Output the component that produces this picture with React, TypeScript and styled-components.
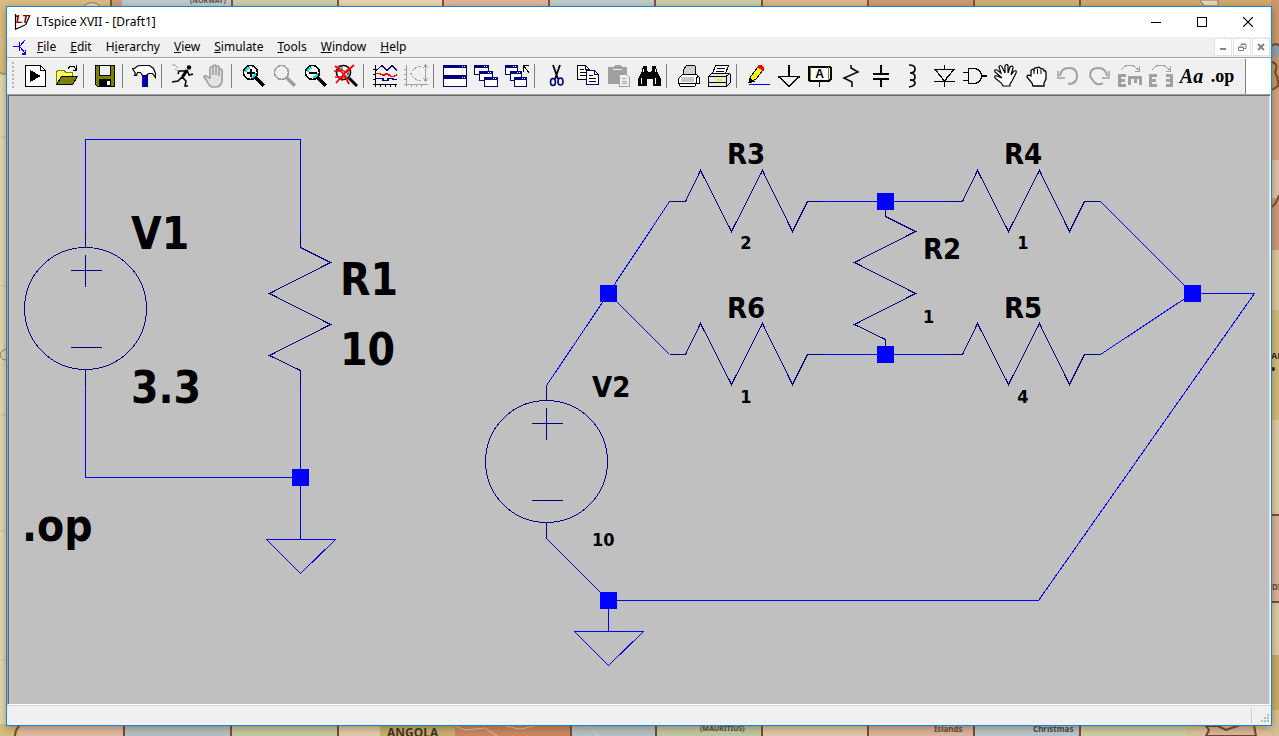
import React from "react";
import styled, { createGlobalStyle } from "styled-components";

const UI_FONT = '"Noto Sans", "Noto Sans CJK TC", sans-serif';
const SHEET_FONT = '"DejaVu Sans Condensed", "DejaVu Sans", sans-serif';
const GREY = "#a0a0a0";
const NAVY = "#000080";
const OLIVE = "#808000";

const GlobalStyle = createGlobalStyle`
  * { box-sizing: border-box; }
  html, body { margin: 0; padding: 0; }
  body { font-family: ${UI_FONT}; font-size: 12px; color: #000; overflow: hidden; }
  button { font: inherit; color: inherit; border: 0; padding: 0; margin: 0; background: none; }
`;

const Desktop = styled.div`
  position: relative;
  display: flex;
  min-height: 100vh;
  padding: 6px 7px 10px 6px;
  background: #e6d7b3;
  overflow: hidden;
`;

const MapSvg = styled.svg`
  position: absolute;
  inset: 0;
  width: 100%;
  height: 100%;
`;

const AppWindow = styled.main`
  position: relative;
  flex: 1;
  min-width: 0;
  display: flex;
  flex-direction: column;
  border: 1px solid #1883d7;
  background: #f0f0f0;
  box-shadow: 0 2px 8px rgba(60, 40, 10, 0.4);
`;

const TitleBar = styled.header`
  display: flex;
  align-items: center;
  height: 30px;
  padding-left: 7px;
  background: #fff;
`;

const Title = styled.h1`
  flex: 1;
  margin: 0 0 0 5px;
  font-size: 12px;
  line-height: 16px;
  font-weight: 400;
`;

const CaptionButton = styled.button`
  display: flex;
  align-items: center;
  justify-content: center;
  width: 46px;
  height: 28px;
`;

const MenuBar = styled.nav`
  display: flex;
  align-items: center;
  height: 20px;
  padding-left: 5px;
`;

const MenuItem = styled.button`
  height: 20px;
  padding: 0 7px;
  line-height: 20px;
`;

const AccessKey = styled.u`
  text-underline-offset: 1px;
`;

const ChildControls = styled.div`
  display: flex;
  gap: 1px;
  margin: 0 1px 0 auto;
  background: #fff;
`;

const ChildButton = styled.button`
  display: flex;
  align-items: center;
  justify-content: center;
  width: 18px;
  height: 18px;
  border: 1px solid #e3e3e3;
  background: #fff;
`;

const ToolRow = styled.div`
  display: flex;
  background: #fff;
  border-top: 1px solid #a0a0a0;
  padding-top: 1px;
`;

const ToolBar = styled.div`
  display: flex;
  align-items: center;
  height: 35px;
  padding: 0 7px 1px 5px;
  background: #f0f0f0;
  border-right: 1px solid #808080;
`;

const Grip = styled.span`
  width: 2px;
  height: 28px;
  margin-right: 5px;
  background: repeating-linear-gradient(#b4b4b4 0 2px, #f0f0f0 2px 4px);
`;

const ToolButton = styled.button`
  flex: none;
  display: flex;
  align-items: center;
  justify-content: center;
  width: 31px;
  height: 30px;
`;

const Lettering = styled.span<{ $italic?: boolean }>`
  font-family: "Liberation Serif", serif;
  font-size: ${(p) => (p.$italic ? "20px" : "18px")};
  line-height: 20px;
  font-weight: 700;
  font-style: ${(p) => (p.$italic ? "italic" : "normal")};
`;

const Separator = styled.span`
  flex: none;
  width: 1px;
  height: 24px;
  margin: 0 5px 0 2px;
  background: #808080;
`;

const Sheet = styled.section`
  flex: 1;
  min-height: 0;
  display: flex;
  background: #c0c0c0;
  border: 1px solid;
  border-color: #a0a0a0 #fff #fff #a0a0a0;
  box-shadow: inset 1px 1px #696969, inset -1px 0 #e3e3e3;
`;

const SheetSvg = styled.svg`
  flex: 1;
  min-width: 0;
  margin: 1px 1px 0 1px;
  font-family: ${SHEET_FONT};
  font-weight: 700;
`;

const StatusBar = styled.footer`
  display: flex;
  align-items: center;
  justify-content: flex-end;
  gap: 9px;
  height: 20px;
  padding-right: 1px;
  border-top: 1px solid #d7d7d7;
`;

const StatusDivider = styled.span`
  width: 1px;
  height: 15px;
  background: #d0d0d0;
`;

const ResizeGrip = styled.svg`
  margin-top: 6px;
`;

/* ---------- map behind the window ---------- */

const topBands: [number, number, string][] = [
  [0, 110, "#d9bd80"], [112, 10, "#cf9a7c"], [122, 109, "#c0cccb"], [232, 105, "#ccd0aa"],
  [339, 104, "#ebd5b0"], [444, 104, "#dfb79c"], [549, 106, "#c1cccb"], [656, 106, "#ccd0aa"],
  [763, 104, "#dcb88a"], [868, 106, "#cf9b72"], [975, 105, "#d0b172"], [1081, 198, "#d2ab6c"],
];
const bottomBands: [number, number, string][] = [
  [0, 19, "#d5bb7c"], [19, 105, "#dfbba4"], [124, 107, "#b4c2c1"], [231, 107, "#c3c9a3"],
  [338, 42, "#dfcba9"], [380, 75, "#c7b070"], [455, 116, "#cb8861"], [571, 85, "#b5c3c8"],
  [656, 106, "#c1c8a3"], [762, 106, "#decaa6"], [868, 106, "#dab49e"], [974, 106, "#b9c7cc"],
  [1080, 107, "#c9cea8"], [1187, 92, "#dac39a"],
];
const sideBands: [number, number, string][] = [
  [0, 43, "#c99770"], [43, 14, "#8ea2a6"], [57, 33, "#c79b66"], [90, 70, "#d2a482"],
  [160, 38, "#dfc1ac"], [198, 52, "#cd9a7a"], [250, 60, "#dbc79b"], [310, 110, "#cfba7c"],
  [420, 95, "#dacba4"], [515, 87, "#d9b39b"], [602, 53, "#dbcaa5"], [655, 55, "#c8ab66"],
  [710, 26, "#d5bf92"],
];

const MapBackdrop = () => (
  <MapSvg viewBox="0 0 1279 736" preserveAspectRatio="none" aria-hidden="true">
    <rect y="0" width="8" height="75" fill="#d9bd80" />
    <path d="M0 137h8M0 286h8M0 415h8M0 531h8M0 660h8" stroke="#cfc09b" />
    <path d="M0 72q4 4 8 0M8 350q-6-2-8 5q2 7 8 4" stroke="#8a7a60" fill="none" />
    {topBands.map(([x, w, c]) => <rect key={x} x={x} width={w} height="8" fill={c} />)}
    <path d="M111 0v8M232 0v8M338 0v8M443 0v8M549 0v8M655 0v8M762 0v8M868 0v8M974 0v8M1080 0v8" stroke="#85503d" strokeWidth="2" />
    <path d="M84 6q8-7 16 0M1200 0l4 6h14v-6z" stroke="#9b7350" fill="#e8d9ba" />
    <text x="190" y="3" fontSize="7" fontWeight="700" fill="#57534c">(NORWAY)</text>
    {bottomBands.map(([x, w, c]) => <rect key={x} x={x} y="724" width={w} height="12" fill={c} />)}
    <path d="M124 724v12M231 724v12M338 724v12M571 724v12M656 724v12M762 724v12M868 724v12M974 724v12M1080 724v12M15 736q0-6 5-11" stroke="#7a4937" strokeWidth="2" fill="none" />
    <path d="M453 725l12 5l20-2l12 8M500 725l20 4l15-3M588 724l10 12" stroke="#e4c9b4" strokeWidth="1" fill="none" />
    <path d="M1206 736l3-6l-3-4h12l8 4l14-5h14l2 11z" fill="#d8b79a" stroke="#75432f" strokeWidth="2" />
    <text x="387" y="737" fontSize="12" fontWeight="700" fill="#3d352a">ANGOLA</text>
    <text x="700" y="731" fontSize="7" fontWeight="700" fill="#4c4a40">(MAURITIUS)</text>
    <text x="934" y="732" fontSize="8" fontWeight="700" fill="#5c4c45">Islands</text>
    <text x="937" y="741" fontSize="7" fontWeight="700" fill="#5c4c45">(AUST.)</text>
    <text x="1033" y="732" fontSize="8" fontWeight="700" fill="#3f494e">Christmas</text>
    <text x="1041" y="741" fontSize="7" fontWeight="700" fill="#3f494e">Island</text>
    {sideBands.map(([y, h, c]) => <rect key={y} x="1271" y={y} width="8" height={h} fill={c} />)}
    <path d="M1272 46q4-4 7 0M1272 62q7 2 3 10q4 8 3 14l-6 4M1279 195q-2 8-7 12M1271 515h8M1271 602h8" stroke="#7a4937" strokeWidth="2" fill="none" />
    <circle cx="1273" cy="369" r="2" fill="#2c261c" />
    <text x="1271" y="359" fontSize="9" fontWeight="700" fill="#2c261c">AN</text>
    <text x="1272" y="590" fontSize="8" fontWeight="700" fill="#5c4c45">DI</text>
  </MapSvg>
);

/* ---------- toolbar icons, each on a 24px grid ---------- */

const Icon = ({ children, smooth }: { children: React.ReactNode; smooth?: boolean }) => (
  <svg width="24" height="24" viewBox="0 0 24 24" fill="none" stroke="#000" aria-hidden="true"
    shapeRendering={smooth ? "auto" : "crispEdges"}>{children}</svg>
);

const Lens = ({ color = "#000", sign }: { color?: string; sign?: "plus" | "minus" }) => (
  <>
    <circle cx="9.500" cy="8.500" r="7" fill={color === "#000" ? "#fff" : "#f0f0f0"} stroke={color} strokeWidth="1.6" />
    {color === "#000" && <path d="M5 8q0-4 4-4M14 9q0 4-4 4" stroke="#00e5ee" strokeWidth="2" />}
    <path d="M15 14L23 22" stroke={color} strokeWidth="3" />
    {sign && <path d="M5.500 8.500h8" strokeWidth="2" />}
    {sign === "plus" && <path d="M9.500 4.500v8" strokeWidth="2" />}
  </>
);

const MiniWindow = ({ x, y, w, h }: { x: number; y: number; w: number; h: number }) => (
  <>
    <rect x={x + 0.5} y={y + 0.5} width={w - 1} height={h - 1} fill="#fff" stroke={NAVY} />
    <rect x={x} y={y} width={w} height="3" fill={NAVY} stroke="none" />
    <path d={`M${x + w - 5} ${y + 1.5}h1m1 0h1`} stroke="#fff" />
  </>
);

const icons: Record<string, React.ReactNode> = {
  run: <Icon><path d="M2.500 1.500h15l5 5v16h-20z" fill="#fff" /><path d="M17.500 1.500v5h5" /><path d="M7 6v12l11-6z" fill="#000" stroke="none" /></Icon>,
  open: <Icon><path d="M2.500 20V8l2-2h5l2 2h7v4" fill="#ffff66" stroke={OLIVE} /><path d="M2.500 20.500l5-8h16l-5 8z" fill={OLIVE} /><path d="M14 4.500l2-2h4l2 3M22.500 1v5h-4" /></Icon>,
  save: <Icon><path d="M2.500 1.500h19v21h-17l-2-2z" fill={OLIVE} /><rect x="6.500" y="1.500" width="11" height="10" fill="#f0f0f0" /><rect x="6" y="15" width="12" height="8" fill="#000" stroke="none" /><rect x="14" y="17" width="3" height="4" fill="#fff" stroke="none" /></Icon>,
  hammer: <Icon smooth><rect x="10" y="9" width="6" height="14" fill="#0000d8" stroke="none" /><path d="M14.500 11v12" stroke={NAVY} strokeWidth="3" /><path d="M0.500 4.500l2 0l3-2.500l3-0.500h9l4 3l2 5v4l-3-4h-4l-2 2h-4l-2-3h-3l-1 3l-2 0l1-2z" fill="#fff" strokeWidth="1.200" /></Icon>,
  runner: <Icon smooth><circle cx="18" cy="3.500" r="2.200" fill="#000" stroke="none" /><path d="M16 6l-4.500 7" strokeWidth="3.200" /><path d="M16 6l2 5l4-1M14 7l-6 0l-1 3M11 13l-4 4l-6 1M11 13l4 4l-1 5h3" strokeWidth="1.500" /><path d="M1 1l3 0l3 3M4 5l3 2" stroke={GREY} /></Icon>,
  halt: <Icon smooth><path d="M8 14V4q2-3 3 0v7V2q2-2 3 0v9V3q2-2 3 0v9V6q2-2 3 0v11q-1 5-5 6h-5q-3-1-5-6l-3-4q1-3 5 1z" fill="#e4e4e4" stroke={GREY} strokeWidth="1.700" /></Icon>,
  zoomIn: <Icon><Lens sign="plus" /></Icon>,
  zoomPan: <Icon><Lens color={GREY} /></Icon>,
  zoomOut: <Icon><Lens sign="minus" /></Icon>,
  zoomFit: <Icon smooth><Lens /><path d="M1 2l5 4l5 6l4 8M20 1l-9 8L2 19" stroke="#f00" strokeWidth="1.800" /><path d="M0 7h6M5 1v5M1 13h10M14 5v6M7 5l4 3l3-3M8 12v5" stroke="#f00" strokeWidth="1.300" /></Icon>,
  autorange: <Icon><path d="M2.500 1v22M0 20.500h24M0 5.500h3M0 10.500h3M0 15.500h3M7.500 20v3M12.500 20v3M17.500 20v3M22.500 20v3" /><path d="M3 6.500l6-5l5 5l5-5l5 5" stroke={NAVY} /><path d="M3 9.500h4l3 2l4-2l4 3h3l3-2" stroke="#f00" strokeWidth="1.500" /><path d="M3 14.500h7v2h5v-2h5v1h4" stroke={NAVY} strokeWidth="1.500" /></Icon>,
  fft: <Icon><g stroke={GREY}><path d="M2.500 1v22M0 20.500h24M0 5.500h3M0 10.500h3M0 15.500h3M7.500 20v3M12.500 20v3M17.500 20v3M21.500 1v16M19 4l2.500-3l2.500 3M19 14l2.500 3l2.500-3" /><path d="M17 2.500h-3q-6 3-7 7q1 4 7 7h3" strokeDasharray="3 1" /></g></Icon>,
  tile: <Icon><MiniWindow x={0} y={1} w={24} h={11} /><MiniWindow x={0} y={12} w={24} h={11} /></Icon>,
  cascade: <Icon><MiniWindow x={0} y={1} w={15} h={10} /><MiniWindow x={5} y={7} w={14} h={10} /><MiniWindow x={10} y={13} w={14} h={10} /></Icon>,
  closeAll: <Icon><MiniWindow x={0} y={1} w={13} h={10} /><MiniWindow x={5} y={7} w={12} h={10} /><MiniWindow x={9} y={13} w={13} h={10} /><path d="M18.500 8V1.500H24M19 2l5 7" /></Icon>,
  cut: <Icon smooth><path d="M9 1l5 14M16 1l-5 14" strokeWidth="1.800" /><ellipse cx="9" cy="18" rx="2.500" ry="3.500" stroke={NAVY} strokeWidth="1.600" /><ellipse cx="16.500" cy="17.500" rx="2.500" ry="3.500" stroke={NAVY} strokeWidth="1.600" /></Icon>,
  copy: <Icon><path d="M2.500 1.500h8l4 4v10h-12z" fill="#fff" /><path d="M10.500 1.500v4h4M5 5.500h4M5 8.500h6M5 11.500h6" /><path d="M11.500 6.500h8l4 4v10h-12z" fill="#fff" stroke={NAVY} /><path d="M19.500 6.500v4h4" stroke={NAVY} /><path d="M14 11.500h4M14 14.500h7M14 17.500h7" /></Icon>,
  paste: <Icon><path d="M2 3h5l2-2h5l2 2h5v17H2z" fill={GREY} stroke="none" /><path d="M7 5.500h9" stroke="#f0f0f0" /><path d="M13.500 10.500h7l3 3v9h-10z" fill="#f0f0f0" stroke={GREY} /><path d="M16 14.500h4M16 17.500h5M16 19.500h5" stroke={GREY} /></Icon>,
  find: <Icon><path d="M6 2h4v4l1 2h3l1-2V2h4l1 5l4 8v7h-8v-7h-6v7H1v-7l4-8z" fill="#000" stroke="none" /><path d="M6.500 5v3M18.500 5v3M4.500 14v6M18.500 14v6" stroke="#fff" /></Icon>,
  print: <Icon><path d="M7.500 11.500v-6l3-4h8l1 1v9" fill="#d0d0d0" /><path d="M2.500 14.500l4-4h14l3 3v6h-3l-2 3h-14l-2-3z" fill="#fff" /><path d="M5 13h13v5H5z" fill="#c8c8c8" stroke="none" /><path d="M2 19.500h18v-6l3-1" /></Icon>,
  pageSetup: <Icon><path d="M5.500 9.500l3-8h13l-3 8" fill="#fff" /><path d="M10 4.500h8M9 7.500h8" /><path d="M1.500 12.500l3-3h18l1 1v8l-4 4h-18z" fill="#e8e8e8" /><path d="M1 12.500h18v10M19 12.500l4-3M1 18.500h18" /><path d="M10 15.500h5" stroke="#ffe600" strokeWidth="2" /></Icon>,
  wire: <Icon><path d="M4 18l1-6l7-9l5 3l-7 9z" fill="#ff0" /><path d="M3 18.500l1-4l4 3z" fill="#000" /><path d="M12 3l1-2h2l2 2v3l-2-1z" fill="#f00" stroke="#f00" /><path d="M3 20.500h21" stroke="#00f" /></Icon>,
  ground: <Icon><path d="M12 1v11" strokeWidth="1.500" /><path d="M1 12.500h22M1.500 12.500l10.500 10l10.500-10" strokeWidth="1.500" /></Icon>,
  label: <Icon><path d="M0.500 3.500l1-1h20l1 1v12l-1 1h-20l-1-1z" fill="#fff" strokeWidth="2" /><path d="M2.500 3v13M20.500 3v13" stroke={OLIVE} /><path d="M11.500 17v6" /><text x="11.500" y="14" fontSize="12" fontWeight="700" textAnchor="middle" fill="#000" stroke="none" fontFamily="Liberation Sans">A</text></Icon>,
  resistor: <Icon smooth><path d="M12 1v3l7 4l-14 6l8 4v5" strokeWidth="1.500" /></Icon>,
  capacitor: <Icon><path d="M11 1v9M11 15v8" strokeWidth="2" /><path d="M3 10h16M3 15h16" strokeWidth="2" /></Icon>,
  inductor: <Icon smooth><path d="M8 1q6 0 6 4t-5 4q5 0 5 4t-5 3q5 0 5 3t-6 4" strokeWidth="1.700" /></Icon>,
  diode: <Icon><path d="M12.500 1v5M12.500 17v6M2 5.500h21M3.500 6l9 11l9-11M2 17.500h21" strokeWidth="1.300" /></Icon>,
  gate: <Icon><path d="M5.500 4.500h6q7 1 7 7.500t-7 7.500h-6zM0 8.500h5M0 16.500h5" strokeWidth="1.300" /><path d="M19 12h5" strokeWidth="2" /></Icon>,
  move: <Icon smooth><path d="M8 14L1 8q-1-3 2-2l4 3L5 3q1-3 3 0l3 6V2q2-3 3 0v7l2-6q3-2 3 1l-2 7l3-4q3-1 2 2l-4 8l-2 3v2H9q-1-3-3-4l-5-4q-1-3 2-2z" fill="#fff" strokeWidth="1.200" /></Icon>,
  drag: <Icon smooth><path d="M6 12V7q1-3 3-1q0-3 3-2q2-2 4 1q3-1 3 2q2-1 2 2v6l-2 4v3H8l-1-3l-5-6q0-3 4-1z" fill="#fff" strokeWidth="1.300" /><path d="M9 6v4M12.500 5v5M16 6v4" /></Icon>,
  undo: <Icon smooth><path d="M4 12q1-8 9-8t8 8t-9 8" stroke={GREY} strokeWidth="2" /><path d="M2 7v7h7" stroke={GREY} strokeWidth="1.500" /></Icon>,
  redo: <Icon smooth><path d="M16 19q-3 2-6 1t-7-8q0-8 8-8t9 8" stroke={GREY} strokeWidth="2" /><path d="M22 7v7h-7" stroke={GREY} strokeWidth="1.500" /></Icon>,
  rotate: <Icon><path d="M3 6l5-4.500h7L21 6M21.500 2v5H17" stroke={GREY} /><path d="M8 11.500H1.500v10H8M2 16.500h5M11.500 21v-7.500h11V21M17 14v5" stroke={GREY} strokeWidth="3" /></Icon>,
  mirror: <Icon><path d="M3 6l5-4.500h7L21 6M21.500 2v5H17" stroke={GREY} /><path d="M8 11.500H1.500v10H8M2 16.500h5M17 11.500h5.500v10H17M22 16.500h-5" stroke={GREY} strokeWidth="3" /></Icon>,
};

const toolGroups: [string, string][][] = [
  [["run", "Run"], ["open", "Open"]],
  [["save", "Save"]],
  [["hammer", "Control Panel"]],
  [["runner", "Run simulation"], ["halt", "Halt"]],
  [["zoomIn", "Zoom in"], ["zoomPan", "Pan"], ["zoomOut", "Zoom out"], ["zoomFit", "Zoom to fit"]],
  [["autorange", "Autorange"], ["fft", "Plot settings"]],
  [["tile", "Tile windows"], ["cascade", "Cascade windows"], ["closeAll", "Close windows"]],
  [["cut", "Cut"], ["copy", "Copy"], ["paste", "Paste"], ["find", "Find"]],
  [["print", "Print"], ["pageSetup", "Print setup"]],
  [["wire", "Wire"], ["ground", "Ground"], ["label", "Label net"], ["resistor", "Resistor"], ["capacitor", "Capacitor"],
    ["inductor", "Inductor"], ["diode", "Diode"], ["gate", "Component"], ["move", "Move"], ["drag", "Drag"],
    ["undo", "Undo"], ["redo", "Redo"], ["rotate", "Rotate"], ["mirror", "Mirror"]],
];

/* menu entries: text before the access key, the key, text after */
const menus: [string, string, string][] = [
  ["", "F", "ile"], ["", "E", "dit"], ["H", "i", "erarchy"], ["", "V", "iew"],
  ["", "S", "imulate"], ["", "T", "ools"], ["", "W", "indow"], ["", "H", "elp"],
];

/* ---------- schematic ---------- */

const VerticalResistor = ({ x, y }: { x: number; y: number }) => (
  <path d={`M${x} ${y - 15}v15l30 15l-61 31l61 31l-61 31l31 15v15`} />
);
const HorizontalResistor = ({ x, y }: { x: number; y: number }) => (
  <path d={`M${x - 16} ${y}h16l15 -31l31 61l31 -61l30 61l15 -30h16`} />
);
const Source = ({ x, y }: { x: number; y: number }) => (
  <>
    <circle cx={x} cy={y} r="61" />
    <path d={`M${x} ${y - 77}v16M${x} ${y + 61}v16M${x - 15} ${y - 38}h31M${x} ${y - 54}v32M${x - 15} ${y + 39}h31`} />
  </>
);
const Ground = ({ x, y }: { x: number; y: number }) => <path d={`M${x - 34} ${y}h69l-35 34z`} />;

const nodes: [number, number][] = [
  [300, 477], [608, 293], [885, 201], [885, 354], [1192, 293], [608, 600],
];

type Label = { x: number; y: number; size: number; text: string; middle?: boolean };
const labels: Label[] = [
  { x: 131, y: 249, size: 44, text: "V1" },
  { x: 131, y: 403, size: 44, text: "3.3" },
  { x: 340, y: 295, size: 44, text: "R1" },
  { x: 340, y: 365, size: 44, text: "10" },
  { x: 22, y: 541, size: 44, text: ".op" },
  { x: 746, y: 164, size: 29, text: "R3", middle: true },
  { x: 1023, y: 164, size: 29, text: "R4", middle: true },
  { x: 746, y: 318, size: 29, text: "R6", middle: true },
  { x: 1023, y: 318, size: 29, text: "R5", middle: true },
  { x: 923, y: 259, size: 29, text: "R2" },
  { x: 592, y: 397, size: 29, text: "V2" },
  { x: 746, y: 249, size: 18, text: "2", middle: true },
  { x: 1023, y: 249, size: 18, text: "1", middle: true },
  { x: 746, y: 403, size: 18, text: "1", middle: true },
  { x: 1023, y: 403, size: 18, text: "4", middle: true },
  { x: 923, y: 323, size: 18, text: "1" },
  { x: 592, y: 546, size: 18, text: "10" },
];

const Schematic = () => (
  <SheetSvg role="img" aria-label="Schematic Draft1">
    <g transform="translate(-9 -96)">
      <g transform="translate(0.5 0.5)" fill="none" shapeRendering="crispEdges">
        <g stroke="#0000ff">
          <path d="M85 232V139H300V232M85 385V477H300V385M300 477V539" />
          <path d="M546 385L608 293L669 201M608 293L669 354M823 201H946M823 354H946M1100 201L1192 293L1100 354" />
          <path d="M546 538L608 600H1038L1254 293H1192M608 600V631M885 201v5M885 350v4" />
          <Ground x={300} y={539} />
          <Ground x={608} y={631} />
        </g>
        <g stroke={NAVY}>
          <Source x={85} y={308} />
          <Source x={546} y={461} />
          <VerticalResistor x={300} y={247} />
          <VerticalResistor x={885} y={216} />
          <HorizontalResistor x={685} y={201} />
          <HorizontalResistor x={962} y={201} />
          <HorizontalResistor x={685} y={354} />
          <HorizontalResistor x={962} y={354} />
        </g>
      </g>
      {nodes.map(([x, y]) => <rect key={`${x}-${y}`} x={x - 8} y={y - 8} width="17" height="17" fill="#0000ff" />)}
      {labels.map((l) => (
        <text key={`${l.x}-${l.y}`} x={l.x} y={l.y} fontSize={l.size} textAnchor={l.middle ? "middle" : "start"}>{l.text}</text>
      ))}
    </g>
  </SheetSvg>
);

export default function App() {
  return (
    <>
      <GlobalStyle />
      <Desktop>
        <MapBackdrop />
        <AppWindow>
          <TitleBar>
            <svg width="17" height="18" viewBox="0 0 17 18" aria-hidden="true">
              <path d="M1.500 1v15M1 16.500L11 12M11.500 12L16 2M1 2l3 2" stroke="#000" strokeWidth="1.200" fill="none" />
              <text x="2" y="10" fontFamily="Liberation Sans" fontSize="11" fontWeight="700" fontStyle="italic" fill="#8b0000">LT</text>
            </svg>
            <Title>LTspice XVII - [Draft1]</Title>
            <CaptionButton aria-label="Minimize"><svg width="10" height="10"><path d="M0 5.500h10" stroke="#000" /></svg></CaptionButton>
            <CaptionButton aria-label="Maximize"><svg width="10" height="10"><rect x="0.500" y="0.500" width="9" height="9" fill="none" stroke="#000" /></svg></CaptionButton>
            <CaptionButton aria-label="Close"><svg width="10" height="10"><path d="M0 0l10 10M10 0l-10 10" stroke="#000" strokeWidth="1.200" /></svg></CaptionButton>
          </TitleBar>
          <MenuBar>
            <svg width="18" height="18" viewBox="0 0 18 18" fill="none" stroke="#00f" aria-hidden="true" shapeRendering="crispEdges">
              <path d="M1 8.500h6M8 8l5-6M8 9l5 6" /><path d="M7.500 4v9M13.500 12v4h-4" strokeWidth="1.500" />
            </svg>
            {menus.map(([a, k, b]) => <MenuItem key={k + b}>{a}<AccessKey>{k}</AccessKey>{b}</MenuItem>)}
            <ChildControls>
              <ChildButton aria-label="Minimize drawing"><svg width="8" height="8"><path d="M1 6h6" stroke="#74869a" strokeWidth="2" /></svg></ChildButton>
              <ChildButton aria-label="Restore drawing"><svg width="9" height="9" fill="none" stroke="#74869a"><path d="M3 3V1.500h5v4H6M3 1h5" /><path d="M0.500 4.500h5v3h-5zM0 4h6" /></svg></ChildButton>
              <ChildButton aria-label="Close drawing"><svg width="8" height="8"><path d="M1 1l6 6M7 1l-6 6" stroke="#74869a" strokeWidth="2" /></svg></ChildButton>
            </ChildControls>
          </MenuBar>
          <ToolRow>
            <ToolBar role="toolbar">
              <Grip />
              {toolGroups.map((group, i) => (
                <React.Fragment key={i}>
                  {i > 0 && <Separator />}
                  {group.map(([id, name]) => <ToolButton key={id} aria-label={name}>{icons[id]}</ToolButton>)}
                </React.Fragment>
              ))}
              <ToolButton aria-label="Text"><Lettering $italic>Aa</Lettering></ToolButton>
              <ToolButton aria-label="SPICE directive"><Lettering>.op</Lettering></ToolButton>
            </ToolBar>
          </ToolRow>
          <Sheet><Schematic /></Sheet>
          <StatusBar>
            <StatusDivider />
            <ResizeGrip width="9" height="9" fill="#b8b8b8" aria-hidden="true">
              <path d="M6 0h2v2h-2zM3 3h2v2h-2zM6 3h2v2h-2zM0 6h2v2h-2zM3 6h2v2h-2zM6 6h2v2h-2z" />
            </ResizeGrip>
          </StatusBar>
        </AppWindow>
      </Desktop>
    </>
  );
}
